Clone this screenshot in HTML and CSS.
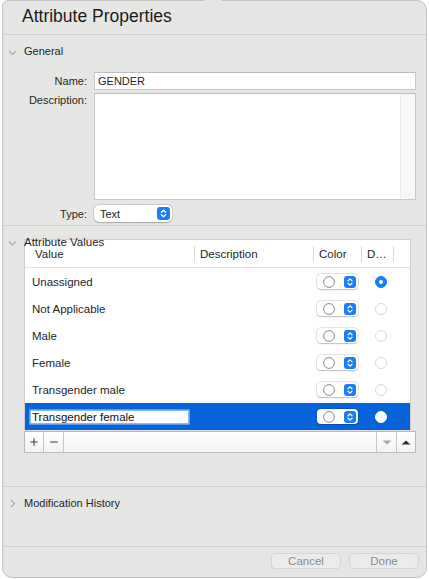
FILE: index.html
```html
<!DOCTYPE html>
<html>
<head>
<meta charset="utf-8">
<title>Attribute Properties</title>
<link rel="stylesheet" href="styles.css">
</head>
<body>
<div class="window">
  <svg class="arrow" width="34" height="4" viewBox="0 0 34 4"><rect x="8" y="0" width="18" height="4" fill="#e6e6e5"/><path d="M0 0.5 H6 Q8.5 0.5 10 -1.5 M24 -1.5 Q25.5 0.5 28 0.5 H34" fill="none" stroke="#c3c3c3"/></svg>
  <div class="title">Attribute Properties</div>

  <section class="sec general">
    <div class="sec-head">
      <svg class="chev" width="9" height="9" viewBox="0 0 9 9"><path d="M1 4 L4.5 7.5 L8 4" fill="none" stroke="#a8a8a8" stroke-width="1.1"/></svg>
      <span>General</span>
    </div>
    <div class="form">
      <div class="frow r-name">
        <div class="lbl">Name:</div>
        <div class="field">GENDER</div>
      </div>
      <div class="frow r-desc">
        <div class="lbl">Description:</div>
        <div class="textarea"><div class="ta-scroll"></div></div>
      </div>
      <div class="frow r-type">
        <div class="lbl">Type:</div>
        <div class="popup">
          <span>Text</span>
          <svg width="13" height="13" viewBox="0 0 13 13"><rect width="13" height="13" rx="3" fill="#1c7ef6"/><path d="M4.4 5.2 6.5 3.2 8.6 5.2M4.4 7.8 6.5 9.8 8.6 7.8" fill="none" stroke="#fff" stroke-width="1.3" stroke-linecap="round" stroke-linejoin="round"/></svg>
        </div>
      </div>
    </div>
  </section>

  <section class="sec values">
    <div class="values-head">
      <svg class="chev" width="9" height="9" viewBox="0 0 9 9"><path d="M1 3.5 L4.5 7 L8 3.5" fill="none" stroke="#a8a8a8" stroke-width="1.1"/></svg>
      <span>Attribute Values</span>
    </div>
    <div class="table">
      <div class="thead">
        <div class="th c1">Value</div>
        <div class="th">Description</div>
        <div class="th">Color</div>
        <div class="th">D…</div>
        <div class="th"></div>
      </div>
      <div class="tbody">
        <div class="tr">
          <div class="td c1">Unassigned</div><div class="td"></div>
          <div class="td"><div class="cpop"><svg width="12" height="12" viewBox="0 0 12 12"><circle cx="6" cy="6" r="5.4" fill="none" stroke="#8a8a8a"/></svg><svg width="12" height="12" viewBox="0 0 12 12"><rect width="12" height="12" rx="3" fill="#1c7ef6"/><path d="M4 4.8 6 2.9 8 4.8M4 7.2 6 9.1 8 7.2" fill="none" stroke="#fff" stroke-width="1.2" stroke-linecap="round" stroke-linejoin="round"/></svg></div></div>
          <div class="td"><span class="radio on"><span class="dot"></span></span></div><div class="td"></div>
        </div>
        <div class="tr">
          <div class="td c1">Not Applicable</div><div class="td"></div>
          <div class="td"><div class="cpop"><svg width="12" height="12" viewBox="0 0 12 12"><circle cx="6" cy="6" r="5.4" fill="none" stroke="#8a8a8a"/></svg><svg width="12" height="12" viewBox="0 0 12 12"><rect width="12" height="12" rx="3" fill="#1c7ef6"/><path d="M4 4.8 6 2.9 8 4.8M4 7.2 6 9.1 8 7.2" fill="none" stroke="#fff" stroke-width="1.2" stroke-linecap="round" stroke-linejoin="round"/></svg></div></div>
          <div class="td"><span class="radio"></span></div><div class="td"></div>
        </div>
        <div class="tr">
          <div class="td c1">Male</div><div class="td"></div>
          <div class="td"><div class="cpop"><svg width="12" height="12" viewBox="0 0 12 12"><circle cx="6" cy="6" r="5.4" fill="none" stroke="#8a8a8a"/></svg><svg width="12" height="12" viewBox="0 0 12 12"><rect width="12" height="12" rx="3" fill="#1c7ef6"/><path d="M4 4.8 6 2.9 8 4.8M4 7.2 6 9.1 8 7.2" fill="none" stroke="#fff" stroke-width="1.2" stroke-linecap="round" stroke-linejoin="round"/></svg></div></div>
          <div class="td"><span class="radio"></span></div><div class="td"></div>
        </div>
        <div class="tr">
          <div class="td c1">Female</div><div class="td"></div>
          <div class="td"><div class="cpop"><svg width="12" height="12" viewBox="0 0 12 12"><circle cx="6" cy="6" r="5.4" fill="none" stroke="#8a8a8a"/></svg><svg width="12" height="12" viewBox="0 0 12 12"><rect width="12" height="12" rx="3" fill="#1c7ef6"/><path d="M4 4.8 6 2.9 8 4.8M4 7.2 6 9.1 8 7.2" fill="none" stroke="#fff" stroke-width="1.2" stroke-linecap="round" stroke-linejoin="round"/></svg></div></div>
          <div class="td"><span class="radio"></span></div><div class="td"></div>
        </div>
        <div class="tr">
          <div class="td c1">Transgender male</div><div class="td"></div>
          <div class="td"><div class="cpop"><svg width="12" height="12" viewBox="0 0 12 12"><circle cx="6" cy="6" r="5.4" fill="none" stroke="#8a8a8a"/></svg><svg width="12" height="12" viewBox="0 0 12 12"><rect width="12" height="12" rx="3" fill="#1c7ef6"/><path d="M4 4.8 6 2.9 8 4.8M4 7.2 6 9.1 8 7.2" fill="none" stroke="#fff" stroke-width="1.2" stroke-linecap="round" stroke-linejoin="round"/></svg></div></div>
          <div class="td"><span class="radio"></span></div><div class="td"></div>
        </div>
        <div class="tr sel">
          <div class="td c1"><div class="edit">Transgender female</div></div><div class="td"></div>
          <div class="td"><div class="cpop"><svg width="12" height="12" viewBox="0 0 12 12"><circle cx="6" cy="6" r="5.4" fill="none" stroke="#8a8a8a"/></svg><svg width="12" height="12" viewBox="0 0 12 12"><rect width="12" height="12" rx="3" fill="#1c7ef6"/><path d="M4 4.8 6 2.9 8 4.8M4 7.2 6 9.1 8 7.2" fill="none" stroke="#fff" stroke-width="1.2" stroke-linecap="round" stroke-linejoin="round"/></svg></div></div>
          <div class="td"><span class="radio white"></span></div><div class="td"></div>
        </div>
      </div>
    </div>
    <div class="bar">
      <div class="bbtn plus"><svg width="8" height="8" viewBox="0 0 8 8"><path d="M4 0.3V7.7M0.3 4H7.7" stroke="#404040" stroke-width="1.1"/></svg></div>
      <div class="bbtn minus"><svg width="8" height="8" viewBox="0 0 8 8"><path d="M0.3 4H7.7" stroke="#404040" stroke-width="1.1"/></svg></div>
      <div class="spacer"></div>
      <div class="bbtn down"><svg width="10" height="5" viewBox="0 0 10 5"><path d="M0.5 0.5H9.5L5 4.6Z" fill="#a8a8a8"/></svg></div>
      <div class="bbtn up"><svg width="10" height="5" viewBox="0 0 10 5"><path d="M0.5 4.5H9.5L5 0.4Z" fill="#333"/></svg></div>
    </div>
  </section>

  <section class="sec history">
    <div class="sec-head">
      <svg class="chev" width="9" height="9" viewBox="0 0 9 9"><path d="M3 1 L6.5 4.5 L3 8" fill="none" stroke="#a8a8a8" stroke-width="1.1"/></svg>
      <span>Modification History</span>
    </div>
  </section>

  <div class="footer">
    <button class="btn">Cancel</button>
    <button class="btn">Done</button>
  </div>
</div>
</body>
</html>
```
FILE: styles.css
```css
* { box-sizing: border-box; margin: 0; padding: 0; }
html, body { background: #ffffff; }
body {
  font-family: "Liberation Sans", Arial, sans-serif;
  font-size: 11px;
  color: #262626;
}
.window {
  position: relative;
  margin-left: 2px;
  width: 425px;
  height: 578px;
  background: #e6e6e5;
  border: 1px solid #c3c3c3;
  border-radius: 6px 10px 10px 10px;
  display: flex;
  flex-direction: column;
}
.arrow { position: absolute; top: -1px; left: 193px; }
.title {
  height: 34px;
  flex: none;
  border-bottom: 1px solid #d2d2d2;
  padding: 0 0 3px 19px;
  display: flex;
  align-items: center;
  font-size: 17.5px;
  color: #1c1c1c;
}
.sec { border-bottom: 1px solid #d2d2d2; flex: none; }
.sec-head {
  height: 32px;
  display: flex;
  align-items: center;
  padding-left: 5px;
}
.chev { flex: none; display: block; }
.sec-head span { margin-left: 7px; }

.form { padding: 5px 0 3px 0; }
.frow { display: flex; column-gap: 7px; }
.lbl { width: 84px; flex: none; text-align: right; }
.r-name { height: 18px; align-items: center; }
.field {
  width: 322px;
  height: 18px;
  background: #fff;
  border: 1px solid #c8c8c8;
  border-top-color: #bdbdbd;
  padding-left: 3px;
  display: flex;
  align-items: center;
}
.r-desc { margin-top: 3px; height: 107px; }
.r-desc .lbl { line-height: 14px; }
.textarea {
  width: 322px;
  height: 107px;
  background: #fff;
  border: 1px solid #c8c8c8;
  border-top-color: #bdbdbd;
  display: flex;
  justify-content: flex-end;
}
.ta-scroll { width: 15px; background: #f8f8f8; border-left: 1px solid #ebebeb; }
.r-type { margin-top: 5px; height: 17px; align-items: center; }
.popup {
  width: 78px;
  height: 17px;
  background: #fff;
  border-radius: 5px;
  box-shadow: 0 0 0 0.5px rgba(0,0,0,0.16), 0 0.5px 1.5px rgba(0,0,0,0.22);
  display: flex;
  align-items: center;
  justify-content: space-between;
  padding: 0 2px 0 6px;
}
.popup svg { display: block; }

.values {
  position: relative;
  padding: 13px 0 33px 21px;
}
.values-head {
  position: absolute;
  z-index: 1;
  top: 9px;
  left: 0;
  height: 14px;
  display: flex;
  align-items: center;
  padding-left: 5px;
  font-size: 11.5px;
  color: #1e1e1e;
}
.values-head span { margin-left: 7px; }
.table {
  width: 387px;
  background: #fff;
  border: 1px solid #cfcfcf;
  border-bottom-color: #e0e0e0;
  font-size: 11.5px;
}
.thead {
  display: grid;
  grid-template-columns: 169px 119px 48px 32px 1fr;
  padding: 6px 0 5px;
  border-bottom: 1px solid #e3e3e3;
}
.th {
  height: 16px;
  border-left: 1px solid #dadada;
  padding-left: 5px;
  display: flex;
  align-items: center;
  white-space: nowrap;
}
.th.c1 { border-left: none; padding-left: 10px; }
.tr {
  display: grid;
  grid-template-columns: 169px 119px 48px 32px 1fr;
  height: 27px;
  align-items: center;
}
.td { display: flex; align-items: center; }
.td.c1 { padding-left: 7px; white-space: nowrap; }
.tr.sel { background: #0763da; }
.tr.sel .td.c1 { padding-left: 5px; }
.edit {
  width: 159px;
  height: 14px;
  background: #fff;
  border: 1px solid #86b6f4;
  box-shadow: 0 0 0 0.5px #b8d4f9;
  padding-left: 1px;
  color: #111;
  display: flex;
  align-items: center;
}
.cpop {
  margin-left: 4px;
  width: 41px;
  height: 15px;
  background: #fff;
  border-radius: 4px;
  box-shadow: 0 0 0 0.5px rgba(0,0,0,0.15), 0 0.5px 1.5px rgba(0,0,0,0.2);
  display: flex;
  align-items: center;
  padding: 0 2px 0 6px;
  justify-content: space-between;
}
.cpop svg { display: block; }
.radio {
  margin-left: 14px;
  width: 12px;
  height: 12px;
  border-radius: 50%;
  background: #fff;
  border: 1px solid #d8d8d8;
  display: flex;
  align-items: center;
  justify-content: center;
}
.radio.on { background: #1c7ef6; border-color: #1c7ef6; }
.radio.white { border-color: #fff; }
.dot { width: 4px; height: 4px; border-radius: 50%; background: #fff; }

.bar {
  width: 392px;
  height: 22px;
  border: 1px solid #b9b9b9;
  background: linear-gradient(#ffffff, #f3f3f3);
  display: flex;
}
.bbtn { display: flex; align-items: center; justify-content: center; }
.bbtn svg { display: block; }
.plus { width: 19px; border-right: 1px solid #c6c6c6; }
.minus { width: 20px; border-right: 1px solid #c6c6c6; }
.spacer { flex: 1; }
.down { width: 20px; border-left: 1px solid #c6c6c6; }
.up { width: 19px; border-left: 1px solid #c6c6c6; }

.history { padding-bottom: 27px; }

.footer {
  flex: 1;
  display: flex;
  justify-content: flex-end;
  align-items: flex-start;
  column-gap: 8px;
  padding: 6px 7px 0 0;
}
.btn {
  width: 70px;
  height: 16px;
  border: 1px solid #d6d6d6;
  border-radius: 4px;
  background: #ebebea;
  color: #8c8c8c;
  font-family: "Liberation Sans", Arial, sans-serif;
  font-size: 11.5px;
  line-height: 14px;
}
```
